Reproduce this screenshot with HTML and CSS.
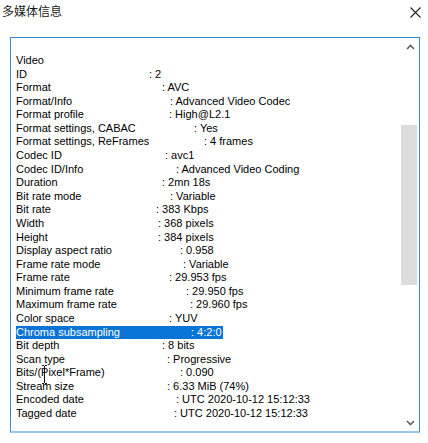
FILE: index.html
```html
<!DOCTYPE html>
<html lang="zh-CN">
<head>
<meta charset="utf-8">
<title>多媒体信息</title>
<link rel="stylesheet" href="styles.css">
</head>
<body>
<div class="dialog">
  <div class="header">
    <div class="title">多媒体信息</div>
    <svg class="close" width="11" height="11" viewBox="0 0 11 11"><path d="M0.5 0.5 L10.5 10.5 M10.5 0.5 L0.5 10.5" stroke="#222" stroke-width="1.1" fill="none"/></svg>
  </div>
  <div class="box">
    <div class="content">
      <div class="row">Video</div>
      <div class="row"><span class="k" style="width:133px">ID</span>: 2</div>
      <div class="row"><span class="k" style="width:146px">Format</span>: AVC</div>
      <div class="row"><span class="k" style="width:154px">Format/Info</span>: Advanced Video Codec</div>
      <div class="row"><span class="k" style="width:153px">Format profile</span>: High@L2.1</div>
      <div class="row"><span class="k" style="width:178px">Format settings, CABAC</span>: Yes</div>
      <div class="row"><span class="k" style="width:188px">Format settings, ReFrames</span>: 4 frames</div>
      <div class="row"><span class="k" style="width:149px">Codec ID</span>: avc1</div>
      <div class="row"><span class="k" style="width:160px">Codec ID/Info</span>: Advanced Video Coding</div>
      <div class="row"><span class="k" style="width:146px">Duration</span>: 2mn 18s</div>
      <div class="row"><span class="k" style="width:154px">Bit rate mode</span>: Variable</div>
      <div class="row"><span class="k" style="width:140px">Bit rate</span>: 383 Kbps</div>
      <div class="row"><span class="k" style="width:142px">Width</span>: 368 pixels</div>
      <div class="row"><span class="k" style="width:142px">Height</span>: 384 pixels</div>
      <div class="row"><span class="k" style="width:164px">Display aspect ratio</span>: 0.958</div>
      <div class="row"><span class="k" style="width:167px">Frame rate mode</span>: Variable</div>
      <div class="row"><span class="k" style="width:153px">Frame rate</span>: 29.953 fps</div>
      <div class="row"><span class="k" style="width:170px">Minimum frame rate</span>: 29.950 fps</div>
      <div class="row"><span class="k" style="width:174px">Maximum frame rate</span>: 29.960 fps</div>
      <div class="row"><span class="k" style="width:153px">Color space</span>: YUV</div>
      <div class="row"><span class="sel"><span class="k" style="width:175px">Chroma subsampling</span>: 4:2:0</span></div>
      <div class="row"><span class="k" style="width:146px">Bit depth</span>: 8 bits</div>
      <div class="row"><span class="k" style="width:151px">Scan type</span>: Progressive</div>
      <div class="row"><span class="k" style="width:164px">Bits/(Pixel*Frame)</span>: 0.090</div>
      <div class="row"><span class="k" style="width:151px">Stream size</span>: 6.33 MiB (74%)</div>
      <div class="row"><span class="k" style="width:160px">Encoded date</span>: UTC 2020-10-12 15:12:33</div>
      <div class="row"><span class="k" style="width:158px">Tagged date</span>: UTC 2020-10-12 15:12:33</div>
      <svg class="ibeam" width="7" height="19" viewBox="0 0 7 19"><path d="M1 0.5 H3 M4 0.5 H6 M3.5 1 V18 M1 18.5 H3 M4 18.5 H6" stroke="#111" stroke-width="1" fill="none"/></svg>
    </div>
    <div class="scrollbar">
      <div class="sbtn"><svg width="9" height="6" viewBox="0 0 9 6"><path d="M1 5 L4.5 1.5 L8 5" stroke="#606060" stroke-width="1.6" fill="none"/></svg></div>
      <div class="track"><div class="thumb"></div></div>
      <div class="sbtn"><svg width="9" height="6" viewBox="0 0 9 6"><path d="M1 1 L4.5 4.5 L8 1" stroke="#606060" stroke-width="1.6" fill="none"/></svg></div>
    </div>
  </div>
</div>
</body>
</html>
```
FILE: styles.css
```css
html, body {
  margin: 0;
  padding: 0;
  background: #ffffff;
}

.dialog {
  width: 428px;
  height: 443px;
  display: flex;
  flex-direction: column;
}

.header {
  height: 37px;
  display: flex;
  justify-content: space-between;
  align-items: flex-start;
}

.title {
  padding-left: 2px;
  font-family: "Noto Sans CJK SC", "Noto Sans", sans-serif;
  font-size: 12px;
  line-height: 22px;
  color: #1a1a1a;
}

.close {
  margin-top: 7px;
  margin-right: 7px;
}

.box {
  margin-left: 10px;
  width: 410px;
  height: 396px;
  box-sizing: border-box;
  border: 1px solid #3a84d0;
  border-bottom: 2px solid #9cc8ee;
  display: flex;
}

.content {
  position: relative;
  flex: 1;
  padding: 16px 0 0 5px;
  font-family: "Liberation Sans", Arial, sans-serif;
  font-size: 11px;
  line-height: 13.58px;
  color: #000;
  white-space: nowrap;
  overflow: hidden;
}

.row {
  height: 13.58px;
}

.k {
  display: inline-block;
}

.sel {
  display: inline-block;
  background: #0a74d6;
  color: #fff;
  padding-right: 1px;
}

.ibeam {
  position: absolute;
  left: 30px;
  top: 327px;
}

.scrollbar {
  width: 18px;
  display: flex;
  flex-direction: column;
}

.sbtn {
  height: 17px;
  display: flex;
  align-items: center;
  justify-content: center;
}

.track {
  flex: 1;
  display: flex;
  flex-direction: column;
}

.thumb {
  margin-top: 70px;
  margin-right: 1px;
  width: 16px;
  height: 160px;
  background: #dcdcdc;
}
```
